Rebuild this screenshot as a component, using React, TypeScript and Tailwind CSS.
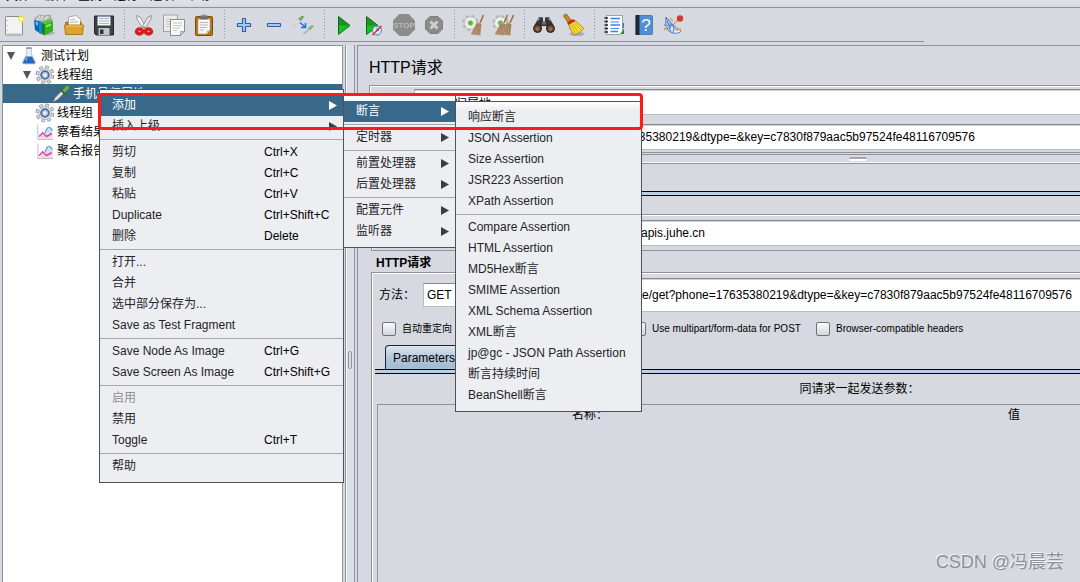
import React from "react";

type Entry = {
  label?: string;
  keys?: string;
  sub?: boolean;
  active?: boolean;
  disabled?: boolean;
};

const SEP: Entry = {};

const nodeMenu: Entry[] = [
  { label: "添加", sub: true, active: true },
  { label: "插入上级", sub: true },
  SEP,
  { label: "剪切", keys: "Ctrl+X" },
  { label: "复制", keys: "Ctrl+C" },
  { label: "粘贴", keys: "Ctrl+V" },
  { label: "Duplicate", keys: "Ctrl+Shift+C" },
  { label: "删除", keys: "Delete" },
  SEP,
  { label: "打开..." },
  { label: "合并" },
  { label: "选中部分保存为..." },
  { label: "Save as Test Fragment" },
  SEP,
  { label: "Save Node As Image", keys: "Ctrl+G" },
  { label: "Save Screen As Image", keys: "Ctrl+Shift+G" },
  SEP,
  { label: "启用", disabled: true },
  { label: "禁用" },
  { label: "Toggle", keys: "Ctrl+T" },
  SEP,
  { label: "帮助" },
];

const addMenu: Entry[] = [
  { label: "断言", sub: true, active: true },
  SEP,
  { label: "定时器", sub: true },
  SEP,
  { label: "前置处理器", sub: true },
  { label: "后置处理器", sub: true },
  SEP,
  { label: "配置元件", sub: true },
  { label: "监听器", sub: true },
];

const assertionMenu: Entry[] = [
  { label: "响应断言" },
  { label: "JSON Assertion" },
  { label: "Size Assertion" },
  { label: "JSR223 Assertion" },
  { label: "XPath Assertion" },
  SEP,
  { label: "Compare Assertion" },
  { label: "HTML Assertion" },
  { label: "MD5Hex断言" },
  { label: "SMIME Assertion" },
  { label: "XML Schema Assertion" },
  { label: "XML断言" },
  { label: "jp@gc - JSON Path Assertion" },
  { label: "断言持续时间" },
  { label: "BeanShell断言" },
];

function Menu({ entries, place, name }: { entries: Entry[]; place: string; name: string }) {
  return (
    <ul
      role="menu"
      aria-label={name}
      className={`absolute border border-[#4f5156] bg-[#edeef2] bg-[linear-gradient(#ffffff,#edeef2_8px,#edeef2)] py-[5px] ${place}`}
    >
      {entries.map((e, i) =>
        e.label ? (
          <li key={i} role="none">
            <button
              role="menuitem"
              disabled={e.disabled}
              className={`flex h-[21px] w-full items-center pr-1.5 pb-px pl-3 text-left whitespace-nowrap ${
                e.active ? "bg-[#39698a] text-white" : e.disabled ? "text-[#8e8f91]" : "text-[#232428]"
              }`}
            >
              <span className="flex-1">{e.label}</span>
              {e.keys && <span className="w-[73px] text-black">{e.keys}</span>}
              {e.sub && (
                <svg width="8" height="9" viewBox="0 0 8 9" className={e.active ? "fill-white" : "fill-[#3c3d42]"}>
                  <path d="M0 0L8 4.5L0 9Z" />
                </svg>
              )}
            </button>
          </li>
        ) : (
          <li key={i} role="separator" className="flex h-[5px] items-center">
            <span className="h-px w-full bg-[#a7a8ae]" />
          </li>
        )
      )}
    </ul>
  );
}

function Svg({ children, size = 24 }: { children: React.ReactNode; size?: number }) {
  return (
    <svg width={size} height={size} viewBox="0 0 24 24" className="block shrink-0">
      {children}
    </svg>
  );
}

const NewIcon = () => (
  <Svg>
    <rect x="3.5" y="3.5" width="17" height="18.5" rx="1" fill="#f3f3f2" stroke="#8a8b88" />
    <path d="M5 20.5H19" stroke="#d5d5d2" />
    <path d="M5.5 7v1M5.5 12v1M5.5 17v1" stroke="#aaa" />
    <circle cx="19.5" cy="6" r="3.6" fill="#f4e94a" opacity=".75" />
    <circle cx="19.5" cy="6" r="1.6" fill="#fffde0" />
  </Svg>
);

const TemplatesIcon = () => (
  <Svg>
    <ellipse cx="15" cy="20" rx="8" ry="2.2" fill="#9da0a5" opacity=".7" />
    <path d="M3 5L8 2L12 3L18 2L20 8L10 11L3 8Z" fill="#b9bcbf" stroke="#85898d" strokeWidth=".6" />
    <path d="M5 7L8 3M9 7L11 3M13 7L16 3" stroke="#eef0f1" />
    <path d="M2 7L9 9V21L3 17Z" fill="#0d62b0" />
    <path d="M3.5 8.5L6 9.2V13L4 12Z" fill="#67c3f5" />
    <path d="M7 8L12 9.5V22L7 19Z" fill="#1587d0" />
    <path d="M10 10L13 11V22.500L10 20.500Z" fill="#0b7f1b" />
    <path d="M12.500 11L21 8V18L12.500 22.500Z" fill="#35b021" />
    <path d="M14 12.500L19 10.500V12.500L14 14.500Z" fill="#9be570" />
    <path d="M9 9L18 6L21 8L12.500 11Z" fill="#50c733" />
  </Svg>
);

const OpenIcon = () => (
  <Svg>
    <path d="M3 10L6 8V19H3Z" fill="#a66c09" />
    <path d="M6.500 4L14 2.500L18.500 6.500V14H6.500Z" fill="#fafafa" stroke="#999" strokeWidth=".8" />
    <path d="M8 7L13 6M8 9.500L16 8.500" stroke="#b4b4b4" />
    <path d="M3 9V21H20V9H18V12H6V9Z" fill="#b97b10" />
    <path d="M2.500 12H21.500L20.500 21.500H3.500Z" fill="#dda32a" stroke="#a06907" strokeWidth=".8" />
    <path d="M3.500 13H20.500" stroke="#f4cd6d" />
  </Svg>
);

const SaveIcon = () => (
  <Svg>
    <path d="M2.500 3H21.500V22H4L2.500 20.500Z" fill="#3d4146" stroke="#24272a" />
    <rect x="5.500" y="3.500" width="13" height="9" fill="#f4f7fa" />
    <path d="M7 5.500H17M7 8H17M7 10.500H17" stroke="#9fb9d2" />
    <rect x="6.500" y="15" width="11" height="7" fill="#c3c6c9" />
    <rect x="8" y="16.500" width="3.500" height="4.500" fill="#303438" />
  </Svg>
);

const CutIcon = () => (
  <Svg>
    <path d="M4.500 2.500L8 4L14.500 15L12 17L5.500 7Z" fill="#f2f2f0" stroke="#85878a" strokeWidth=".8" />
    <path d="M19.500 2.500L16 4L9.500 15L12 17L18.500 7Z" fill="#e4e4e2" stroke="#85878a" strokeWidth=".8" />
    <ellipse cx="7.500" cy="18.500" rx="3" ry="2.500" fill="#e8b3b3" stroke="#d91c1c" strokeWidth="3.400" />
    <ellipse cx="16.500" cy="18.500" rx="3" ry="2.500" fill="#e8b3b3" stroke="#d91c1c" strokeWidth="3.400" />
    <circle cx="12" cy="14.500" r="1" fill="#777" />
  </Svg>
);

const CopyIcon = () => (
  <Svg>
    <rect x="1.500" y="2" width="14" height="16.500" fill="#ececeb" stroke="#a1a2a0" />
    <path d="M4 6H9M4 8.500H8M4 11H8M4 13.500H8" stroke="#c4c5c2" />
    <path d="M8.500 6.500H22.500V18.500L18.500 22.500H8.500Z" fill="#f8f8f7" stroke="#8b8c89" />
    <path d="M11 10H20M11 12.500H20M11 15H18M11 17.500H15" stroke="#c4c5c2" />
    <path d="M22.500 18.500H18.500V22.500Z" fill="#d0d0ce" stroke="#8b8c89" strokeWidth=".7" />
  </Svg>
);

const PasteIcon = () => (
  <Svg>
    <rect x="3.500" y="3.500" width="17" height="19" rx="1" fill="#b7740f" stroke="#7d4d06" />
    <path d="M6 6H18V17L14.500 21H6Z" fill="#f8f8f7" stroke="#a2a2a0" strokeWidth=".7" />
    <rect x="8" y="2.500" width="8" height="4" rx="1" fill="#6e706d" />
    <rect x="10.500" y="1.500" width="3" height="2" fill="#8c8e8b" />
    <path d="M8 9.500H16M8 12H16M8 14.500H15M8 17H12" stroke="#b6b7b4" />
    <path d="M18 17H14.500V21Z" fill="#c9c9c7" />
  </Svg>
);

const PlusIcon = () => (
  <Svg>
    <path d="M10.500 5.500H13.500V10.500H18.500V13.500H13.500V18.500H10.500V13.500H5.500V10.500H10.500Z" fill="#a7c9ee" stroke="#2e62a8" strokeWidth="1.200" strokeLinejoin="round" />
  </Svg>
);

const MinusIcon = () => (
  <Svg>
    <rect x="5.500" y="10.500" width="13" height="3" rx=".5" fill="#a7c9ee" stroke="#2e62a8" strokeWidth="1.200" />
  </Svg>
);

const ToggleIcon = () => (
  <Svg>
    <path d="M1.500 12.500L7 7" stroke="#a9adac" strokeWidth="2.400" />
    <path d="M2 12L7 7" stroke="#f8faf9" strokeWidth="1.200" />
    <path d="M6 6L10 2.500L12.500 3.500L9 8Z" fill="#78a860" />
    <path d="M8 9.500L13 14M13.500 10V14.500H9" stroke="#1b70e8" strokeWidth="1.500" fill="none" />
    <path d="M11.500 21L17 16.500" stroke="#b4b8b6" strokeWidth="1.800" />
    <path d="M15.500 15.500L20 12L22 13L18.500 17Z" fill="#86b071" />
  </Svg>
);

const PlayShape = () => (
  <>
    <path d="M6.500 3.500L18 12.500L6.500 21.500Z" fill="#2ba52a" stroke="#0c6c12" />
    <path d="M7 12.500L17 12.500L7 20.500Z" fill="#0bd01b" opacity=".8" />
    <path d="M7 4.500L17 12.500H7Z" fill="#1e7f27" opacity=".6" />
  </>
);

const PlayIcon = () => (
  <Svg>
    <PlayShape />
  </Svg>
);

const PlayNoPauseIcon = () => (
  <Svg>
    <g transform="translate(-2)">
      <PlayShape />
    </g>
    <circle cx="15" cy="17.500" r="4.500" fill="#dbe8f7" stroke="#4b7fb8" />
    <path d="M15 17.500V14.500M15 17.500H17" stroke="#4b7fb8" />
    <path d="M10.500 22L19.500 13" stroke="#d22b2b" strokeWidth="1.500" />
  </Svg>
);

const StopIcon = () => (
  <Svg>
    <path d="M7.500 1H16.500L23 7.500V16.500L16.500 23H7.500L1 16.500V7.500Z" fill="#8b8b8b" />
    <text x="12" y="15" textAnchor="middle" fontSize="8" fontWeight="bold" fill="#b9b9b9">
      STOP
    </text>
  </Svg>
);

const ShutdownIcon = () => (
  <Svg>
    <path d="M8 3.500H16L20.500 8V16L16 20.500H8L3.500 16V8Z" fill="#8b8b8b" stroke="#7d7d7d" />
    <path d="M8.500 8.500L15.500 15.500M15.500 8.500L8.500 15.500" stroke="#cfcfcf" strokeWidth="3" />
  </Svg>
);

const Broom = () => (
  <>
    <path d="M21.500 2L18 10" stroke="#9b6b3e" strokeWidth="1.500" />
    <path d="M15 9L19.500 11L18.500 22.500L8.500 21.500Z" fill="#b99674" />
    <path d="M15.500 11L11 21M17 11L14 22M18.500 11L17 22" stroke="#8d6d4a" strokeWidth=".7" />
  </>
);

const Cog = () => (
  <>
    <circle cx="8.500" cy="10" r="6.500" fill="none" stroke="#b3b6b2" strokeWidth="3.400" strokeDasharray="2.800 2.300" />
    <circle cx="8.500" cy="10" r="6" fill="#f0f2f0" stroke="#c4c7c3" strokeWidth="1" />
    <circle cx="8.500" cy="10" r="2.700" fill="#5cb53c" stroke="#b6d9aa" />
  </>
);

const ClearIcon = () => (
  <Svg>
    <Cog />
    <Broom />
  </Svg>
);

const ClearAllIcon = () => (
  <Svg>
    <Cog />
    <g transform="translate(-6)">
      <Broom />
    </g>
    <Broom />
  </Svg>
);

const SearchIcon = () => (
  <Svg>
    <path d="M7 4L11 4.500V11H13V4.500L17 4L22 13V17H14.500V13H9.500V17H2V13Z" fill="#34322f" />
    <path d="M5 8L8 5M19 8L16 5" stroke="#8f8d8a" strokeWidth="1.500" />
    <circle cx="5.500" cy="15.500" r="4" fill="#4e4a45" stroke="#222" />
    <circle cx="18.500" cy="15.500" r="4" fill="#4e4a45" stroke="#222" />
    <circle cx="5.500" cy="16" r="2" fill="#b3622c" />
    <circle cx="18.500" cy="16" r="2" fill="#b3622c" />
    <circle cx="12" cy="10" r="2" fill="#6e6b67" />
  </Svg>
);

const ResetSearchIcon = () => (
  <Svg>
    <ellipse cx="15" cy="21" rx="7.500" ry="2" fill="#a9acb2" />
    <path d="M1.500 3Q2 .8 4.500 1.200L9 7L6 9.500Z" fill="#c98a27" stroke="#875508" strokeWidth=".8" />
    <path d="M6.500 11L13 7.500L22 15.500Q18 20 12.500 22Q8 18 6.500 11Z" fill="#f4dc3a" stroke="#a8860b" strokeWidth=".9" />
    <path d="M9 12L13.500 20M11 11L16 19M13 10.500L19 17" stroke="#c7a20f" strokeWidth=".8" />
    <path d="M5 9.500L11 6L13.500 8L6.500 12Z" fill="#d5261d" />
  </Svg>
);

const HelperIcon = () => (
  <Svg>
    <path d="M18 10H22V15H18Z" fill="#2776e8" />
    <path d="M18 16.500H22V21H18Z" fill="#208b2b" />
    <path d="M4.500 2.500H20.500V18L18 21.500H4.500Z" fill="#fdfdfd" stroke="#8a8c8f" strokeWidth=".8" />
    <path d="M8.500 5.500H18M8.500 12H18M8.500 18.500H16" stroke="#2b8af0" strokeWidth="1.400" />
    <path d="M8.500 9H17M8.500 15.500H17" stroke="#3d8fe6" strokeWidth="1" />
    <path d="M2.500 5H6M2.500 8.500H6M2.500 12H6M2.500 15.500H6M2.500 19H6" stroke="#242424" strokeWidth="1.400" />
  </Svg>
);

const HelpIcon = () => (
  <Svg>
    <rect x="4" y="2.500" width="16.500" height="19" rx="1" fill="#4f8fd8" stroke="#3c6ea9" strokeWidth=".8" />
    <rect x="3.500" y="2" width="4" height="20" fill="#1e2733" />
    <text x="14" y="18" textAnchor="middle" fontSize="17" fill="#fff">
      ?
    </text>
  </Svg>
);

const KiteIcon = () => (
  <Svg>
    <path d="M4 4Q2 17 10 20Q18 21 19 18L11 12Z" fill="#e3ebf7" stroke="#4d78bd" strokeWidth=".9" />
    <path d="M4 4L9 19M6 7L14 17M2 12L12 13M4 9L9 12M9 13L6 18M12 14L11 20M2 16L9 14" stroke="#5485c7" strokeWidth="1" fill="none" />
    <path d="M2 17L5 14M8 5L11 8M14 17L19 16" stroke="#e99642" strokeWidth="1.300" />
    <path d="M11 12L16 7" stroke="#d9534a" strokeWidth=".8" />
    <circle cx="18" cy="5.500" r="3.200" fill="#d63a2e" />
  </Svg>
);

const toolGroups: { name: string; Icon: () => React.JSX.Element }[][] = [
  [
    { name: "新建", Icon: NewIcon },
    { name: "模板", Icon: TemplatesIcon },
    { name: "打开", Icon: OpenIcon },
    { name: "保存", Icon: SaveIcon },
  ],
  [
    { name: "剪切", Icon: CutIcon },
    { name: "复制", Icon: CopyIcon },
    { name: "粘贴", Icon: PasteIcon },
  ],
  [
    { name: "展开", Icon: PlusIcon },
    { name: "折叠", Icon: MinusIcon },
    { name: "切换", Icon: ToggleIcon },
  ],
  [
    { name: "启动", Icon: PlayIcon },
    { name: "不停顿开始", Icon: PlayNoPauseIcon },
    { name: "停止", Icon: StopIcon },
    { name: "关闭", Icon: ShutdownIcon },
  ],
  [
    { name: "清除", Icon: ClearIcon },
    { name: "清除全部", Icon: ClearAllIcon },
  ],
  [
    { name: "查找", Icon: SearchIcon },
    { name: "重置查找", Icon: ResetSearchIcon },
  ],
  [
    { name: "函数助手", Icon: HelperIcon },
    { name: "帮助", Icon: HelpIcon },
    { name: "插件", Icon: KiteIcon },
  ],
];

const FlaskIcon = () => (
  <Svg size={18}>
    <path d="M9 1H15V9L20.500 20Q21 22.500 19 22.500H5Q3 22.500 3.500 20L9 9Z" fill="#e8f0f8" stroke="#a3aebb" />
    <path d="M8 12.500H16L20 20.500Q20 22 19 22H5Q4 22 4 20.500Z" fill="#2468c0" />
    <path d="M7 16L10 13L9 19Z" fill="#7fb7f2" />
    <path d="M8.500 1.500H15.500" stroke="#8b9198" strokeWidth="2" />
  </Svg>
);

const GearIcon = () => (
  <Svg size={20}>
    <circle cx="12" cy="12" r="9" fill="none" stroke="#8b8f95" strokeWidth="4.600" strokeDasharray="4.200 2.870" />
    <circle cx="12" cy="12" r="9" fill="none" stroke="#d9dbde" strokeWidth="2.800" strokeDasharray="3 4.070" strokeDashoffset="-.6" />
    <circle cx="12" cy="12" r="7.800" fill="#dfe1e4" stroke="#a6a9ae" strokeWidth="1" />
    <circle cx="12" cy="12" r="4.600" fill="#b8cbe6" stroke="#4f6b98" strokeWidth="2.200" />
    <circle cx="12" cy="12" r="1.800" fill="#f3f6fa" />
  </Svg>
);

const DropperIcon = () => (
  <Svg size={20}>
    <path d="M1.500 22.500L5 16L12.500 8.500L15.500 11.500L8 19Z" fill="#e2e6e3" stroke="#5c615e" strokeWidth="1.200" />
    <path d="M11.500 6.500L17.500 12.500" stroke="#3c5f33" strokeWidth="2.500" />
    <path d="M13 7.500L18 2Q22 .5 22.500 5L16.500 11Z" fill="#6aa858" stroke="#2f7024" />
  </Svg>
);

const ChartIcon = () => (
  <Svg size={18}>
    <path d="M2.500 2V22H23" stroke="#b4b7bc" fill="none" strokeWidth="1.200" />
    <path d="M4 21V18L9 13L14 17L22 14V21Z" fill="#f5d3e8" />
    <path d="M13 12Q16 4 20 6L22 10V15L14 17Z" fill="#cfe1f5" />
    <path d="M4 18L9 13L14 18L21 14" stroke="#dd4a98" strokeWidth="2" fill="none" />
    <path d="M12 14Q15 4 18.500 6L22 10" stroke="#6a9fd8" strokeWidth="1.600" fill="none" />
  </Svg>
);

const treeRows = [
  { pad: "pl-1", Icon: FlaskIcon, text: "测试计划", open: true },
  { pad: "pl-5", Icon: GearIcon, text: "线程组", open: true },
  { pad: "pl-9", Icon: DropperIcon, text: "手机号归属地", selected: true },
  { pad: "pl-5", Icon: GearIcon, text: "线程组" },
  { pad: "pl-5", Icon: ChartIcon, text: "察看结果树" },
  { pad: "pl-5", Icon: ChartIcon, text: "聚合报告" },
];

const fieldClass =
  "min-w-0 flex-1 border border-[#b9bbbf] border-t-[#85888e] bg-white px-1 text-black shadow-[inset_0_1px_0_#d3d4d7] outline-none";

function Check({ id, label }: { id: string; label: string }) {
  return (
    <span className="flex shrink-0 items-center gap-1.5 text-[10px] whitespace-nowrap">
      <input
        id={id}
        type="checkbox"
        className="size-3.5 appearance-none rounded-[2px] border border-[#6f7279] bg-[linear-gradient(#fbfbfc,#d3d5da)]"
      />
      <label htmlFor={id}>{label}</label>
    </span>
  );
}

const URL_QUERY = "get?phone=17635380219&dtype=&key=c7830f879aac5b97524fe48116709576";

export default function App() {
  return (
    <div className="relative flex h-screen flex-col overflow-hidden bg-[#d6d9e0] font-['Liberation_Sans','Noto_Sans_CJK_SC',sans-serif] text-[12px] leading-4 text-black">
      <nav className="flex h-2 shrink-0 items-end gap-3 overflow-hidden border-b border-[#8f929b] bg-[linear-gradient(#dfe2e7,#d6d9e0)] pb-[3px] pl-1.5">
        {["文件", "编辑", "查找", "运行", "选项", "帮助"].map((m) => (
          <a key={m} href="#" className="leading-4">
            {m}
          </a>
        ))}
      </nav>

      <div role="toolbar" className="-ml-px flex h-[34px] w-[925px] max-w-full shrink-0 items-center border-b border-[#8f929b]">
        {toolGroups.map((group, g) => (
          <React.Fragment key={g}>
            {g > 0 && (
              <span className="flex w-2.5 justify-center self-stretch py-0.5">
                <span className="w-px bg-[repeating-linear-gradient(#8f929b_0px,#8f929b_1px,transparent_1px,transparent_3px)]" />
              </span>
            )}
            {group.map(({ name, Icon }) => (
              <button key={name} aria-label={name} className="flex w-[30px] justify-center">
                <Icon />
              </button>
            ))}
          </React.Fragment>
        ))}
      </div>

      <main className="flex min-h-0 flex-1 pt-[3px]">
        <div className="ml-0.5 w-[341px] shrink-0 border border-b-0 border-[#8f929b] bg-white">
          <ul role="tree">
            {treeRows.map(({ pad, Icon, text, open, selected }, i) => (
              <li
                key={i}
                role="treeitem"
                className={`flex h-[19px] items-center whitespace-nowrap ${pad} ${selected ? "bg-[#39698a] text-white" : ""}`}
              >
                <span className="flex w-3 shrink-0 items-center">
                  {open && (
                    <svg width="8" height="8" viewBox="0 0 8 8">
                      <path d="M0 0H8L4 8Z" fill="#54565b" />
                    </svg>
                  )}
                </span>
                <span className="flex w-5 shrink-0 justify-center">
                  <Icon />
                </span>
                <span className="ml-0.5">{text}</span>
              </li>
            ))}
          </ul>
        </div>

        <div className="mx-0.5 flex w-2.5 shrink-0 items-center justify-center border-x border-[#8f929b] bg-[#dcdfe5] pt-[92px] shadow-[inset_1px_0_0_#f5f6f8]">
          <span className="h-[18px] w-1 rounded-sm border border-[#8f929b]" />
        </div>

        <div className="min-w-0 flex-1 overflow-hidden">
          <div className="flex h-full w-[1002px] flex-col">
            <section className="border border-[#8f929b] pb-px pl-[11px]">
              <h1 className="flex h-[39px] items-center pt-1 text-base">HTTP请求</h1>
              <div className="flex flex-col gap-[9px] border border-[#8f929b] pt-[3px] pb-0.5 shadow-[inset_1px_1px_0_#fff]">
                <div className="flex items-center">
                  <label htmlFor="name" className="w-11 pl-1">
                    名称：
                  </label>
                  <input id="name" className={`${fieldClass} h-[26px]`} defaultValue="手机号归属地" />
                </div>
                <div className="flex items-center">
                  <label htmlFor="note" className="w-11 pl-1">
                    注释：
                  </label>
                  <input id="note" className={`${fieldClass} h-[26px]`} defaultValue={`http://apis.juhe.cn/mobile/${URL_QUERY}`} />
                </div>
              </div>
            </section>

            <div className="flex h-2 shrink-0 items-center justify-center border-b border-[#f5f6f8]">
              <span className="h-1 w-[18px] rounded-sm border-t-2 border-[#a3a6ae] bg-white" />
            </div>

            <section className="flex min-h-0 flex-1 flex-col border border-b-0 border-[#8f929b]">
              <div className="h-[27px] shrink-0" />
              <div className="h-[5px] shrink-0 border-y border-black bg-[#b8cfe5]" />
              <div className="flex min-h-0 flex-1 flex-col px-[13px]">
                <h2 className="h-[18px] shrink-0 pl-1 font-bold">Web服务器</h2>
                <div className="flex shrink-0 items-center border border-[#8f929b] pt-[5px] pb-1 pl-[264px] shadow-[inset_1px_1px_0_#fff]">
                  <input aria-label="服务器名称或IP" className={`${fieldClass} h-[26px]`} defaultValue="apis.juhe.cn" />
                </div>
                <h2 className="flex h-[21px] shrink-0 items-center pt-0.5 pl-[5px] font-bold">HTTP请求</h2>
                <div className="flex min-h-0 flex-1 flex-col border border-b-0 border-[#8f929b] pt-[5px] pl-[3px] shadow-[inset_1px_1px_0_#fff]">
                  <div className="flex h-[34px] shrink-0 items-center">
                    <label htmlFor="method" className="w-12 pl-1">
                      方法：
                    </label>
                    <select
                      id="method"
                      className="h-6 w-28 appearance-none border border-[#b9bbbf] border-t-[#85888e] bg-white px-[3px]"
                    >
                      <option>GET</option>
                      <option>POST</option>
                    </select>
                    <label htmlFor="path" className="w-[70px] pl-6">
                      路径：
                    </label>
                    <input id="path" className={`${fieldClass} h-[34px]`} defaultValue={`/mobile/${URL_QUERY}`} />
                  </div>
                  <div className="grid h-[33px] shrink-0 grid-cols-[250px_184px_auto] items-center pl-[7px]">
                    <div className="flex gap-3 overflow-hidden">
                      <Check id="redirect" label="自动重定向" />
                      <Check id="follow" label="跟随重定向" />
                      <Check id="keepalive" label="KeepAlive" />
                    </div>
                    <Check id="multipart" label="Use multipart/form-data for POST" />
                    <Check id="compat" label="Browser-compatible headers" />
                  </div>
                  <div className="flex h-6 shrink-0 pl-2.5">
                    <button className="h-[25px] rounded-t-[4px] border border-b-0 border-[#1c2733] bg-[linear-gradient(#dfe7ef,#b2c6da_50%,#a3bcd3_90%,#b8cfe5)] px-[7px]">
                      Parameters
                    </button>
                  </div>
                  <div className="h-[5px] shrink-0 border-y border-black bg-[#b8cfe5]" />
                  <h3 className="flex h-[30px] shrink-0 items-center justify-center">同请求一起发送参数：</h3>
                  <div className="ml-0.5 min-h-0 flex-1 border border-b-0 border-[#8f929b]">
                    <table className="w-full table-fixed">
                      <thead>
                        <tr className="h-5">
                          <th className="w-[424px] font-normal">名称：</th>
                          <th className="w-[424px] font-normal">值</th>
                          <th className="font-normal">编码？</th>
                        </tr>
                      </thead>
                    </table>
                  </div>
                </div>
              </div>
            </section>
          </div>
        </div>
      </main>

      <Menu name="节点" entries={nodeMenu} place="left-[99px] top-[89px] w-[245px]" />
      <Menu name="添加" entries={addMenu} place="left-[343px] top-[95px] w-[113px]" />
      <Menu name="断言" entries={assertionMenu} place="left-[455px] top-[101px] w-[187px]" />
      <div className="pointer-events-none absolute top-[93px] left-[98px] h-[37px] w-[545px] rounded-[4px] border-3 border-[#fd1b14]" />
      <p className="absolute right-4 bottom-2 text-[18px] leading-6 text-[#8d9096] [text-shadow:-1px_-1px_0_#f4f5f7]">
        CSDN @冯晨芸
      </p>
    </div>
  );
}
